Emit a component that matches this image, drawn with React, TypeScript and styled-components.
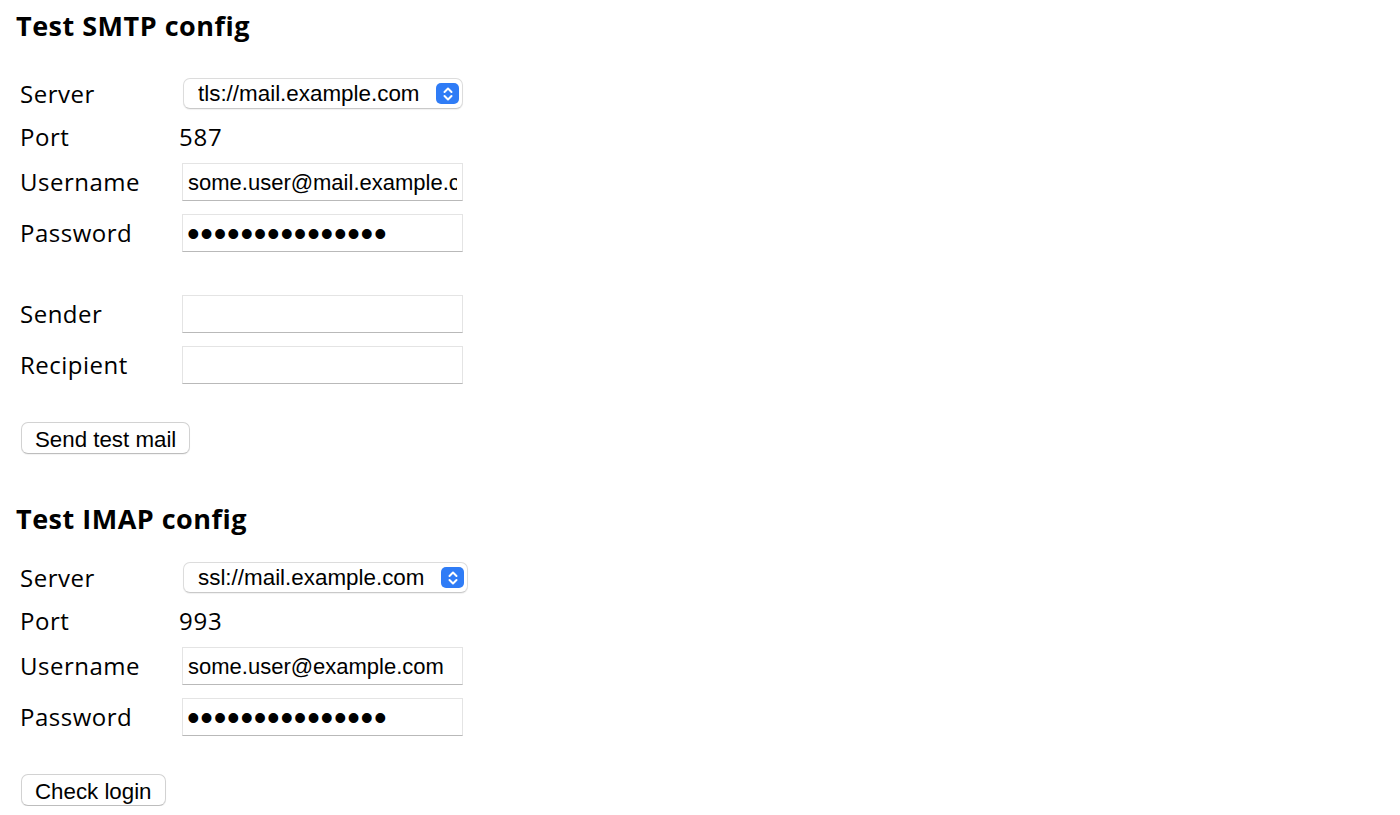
import React from "react";
import styled, { createGlobalStyle } from "styled-components";

const GlobalStyle = createGlobalStyle`
  html, body {
    margin: 0;
    padding: 0;
    background: #ffffff;
    color: #000000;
    font-family: "Open Sans", "Noto Sans", sans-serif;
  }
`;

const Page = styled.div`
  display: flex;
  flex-direction: column;
  padding: 10px 0 0 16px;
`;

const Section = styled.section<{ $after?: number }>`
  display: flex;
  flex-direction: column;
  align-items: flex-start;
  margin-bottom: ${(p) => p.$after ?? 0}px;
`;

const Title = styled.h2`
  margin: 0;
  font-family: "Open Sans", "Noto Sans", sans-serif;
  font-weight: 700;
  font-size: 27px;
  line-height: 32px;
  letter-spacing: 0.5px;
  color: #000;
`;

const Fields = styled.div<{ $top: number }>`
  display: flex;
  flex-direction: column;
  gap: 13px;
  margin-top: ${(p) => p.$top}px;
`;

const Row = styled.div<{ $h: number; $pt?: number }>`
  display: grid;
  grid-template-columns: 166px auto;
  align-items: center;
  height: ${(p) => p.$h}px;
  padding-top: ${(p) => p.$pt ?? 0}px;
  box-sizing: border-box;
`;

const Spacer = styled.div`
  height: 17px;
`;

const Label = styled.span`
  padding-left: 4px;
  font-size: 24px;
  line-height: 28px;
  letter-spacing: 0.5px;
`;

const Value = styled.span`
  font-size: 24px;
  line-height: 28px;
  letter-spacing: 0.8px;
  margin-left: -3px;
`;

const TextInput = styled.input`
  box-sizing: border-box;
  width: 281px;
  height: 38px;
  margin: 0;
  padding: 1px 5px 0;
  border: 1px solid #e4e4e4;
  border-bottom-color: #b9b9b9;
  border-radius: 0;
  background: #fff;
  font-family: "Liberation Sans", Arial, sans-serif;
  font-size: 22px;
  color: #000;
  outline: none;
`;

const PasswordInput = styled(TextInput)`
  font-size: 36px;
  letter-spacing: 0.75px;
  padding-left: 4px;
`;

const SelectWrap = styled.div`
  position: relative;
  display: inline-flex;
  justify-self: start;
  margin-left: 1px;
`;

const Select = styled.select`
  appearance: none;
  -webkit-appearance: none;
  box-sizing: border-box;
  height: 31px;
  margin: 0;
  padding: 0 42px 0 14px;
  border: 1px solid #dcdcdc;
  border-bottom-color: #c9c9c9;
  border-radius: 7px;
  background: #fff;
  box-shadow: 0 1px 1px rgba(0, 0, 0, 0.06);
  font-family: "Liberation Sans", Arial, sans-serif;
  font-size: 22.4px;
  color: #000;
  outline: none;
`;

const Stepper = styled.span`
  position: absolute;
  right: 4px;
  top: 5px;
  width: 23px;
  height: 21px;
  border-radius: 5px;
  background: #2f7cf6;
  display: flex;
  align-items: center;
  justify-content: center;
  pointer-events: none;
`;

const Button = styled.button<{ $top: number }>`
  box-sizing: border-box;
  height: 32px;
  margin: ${(p) => p.$top}px 0 0 5px;
  padding: 3px 13px 0;
  border: 1px solid #d2d2d2;
  border-bottom-color: #bdbdbd;
  border-radius: 7px;
  background: #fff;
  box-shadow: 0 1px 1px rgba(0, 0, 0, 0.05);
  font-family: "Liberation Sans", Arial, sans-serif;
  font-size: 22.3px;
  line-height: 26px;
  color: #000;
  cursor: pointer;
`;

const StepperIcon = () => (
  <svg width="12" height="16" viewBox="0 0 12 16" fill="none">
    <path d="M2.5 6 L6 2.5 L9.5 6" stroke="#fff" strokeWidth="2" strokeLinecap="round" strokeLinejoin="round" />
    <path d="M2.5 10 L6 13.5 L9.5 10" stroke="#fff" strokeWidth="2" strokeLinecap="round" strokeLinejoin="round" />
  </svg>
);

const ServerSelect = ({ value }: { value: string }) => (
  <SelectWrap>
    <Select defaultValue={value}>
      <option value={value}>{value}</option>
    </Select>
    <Stepper>
      <StepperIcon />
    </Stepper>
  </SelectWrap>
);

export default function App() {
  return (
    <>
      <GlobalStyle />
      <Page>
        <Section $after={49}>
          <Title>Test SMTP config</Title>
          <Fields $top={36}>
            <Row $h={31}>
              <Label>Server</Label>
              <ServerSelect value="tls://mail.example.com" />
            </Row>
            <Row $h={28} $pt={1}>
              <Label>Port</Label>
              <Value>587</Value>
            </Row>
            <Row $h={38}>
              <Label>Username</Label>
              <TextInput type="text" defaultValue="some.user@mail.example.com" />
            </Row>
            <Row $h={38}>
              <Label>Password</Label>
              <PasswordInput type="password" defaultValue="secretpassword1" />
            </Row>
            <Spacer />
            <Row $h={38}>
              <Label>Sender</Label>
              <TextInput type="text" defaultValue="" />
            </Row>
            <Row $h={38}>
              <Label>Recipient</Label>
              <TextInput type="text" defaultValue="" />
            </Row>
          </Fields>
          <Button $top={38}>Send test mail</Button>
        </Section>
        <Section>
          <Title>Test IMAP config</Title>
          <Fields $top={27}>
            <Row $h={31}>
              <Label>Server</Label>
              <ServerSelect value="ssl://mail.example.com" />
            </Row>
            <Row $h={28} $pt={1}>
              <Label>Port</Label>
              <Value>993</Value>
            </Row>
            <Row $h={38}>
              <Label>Username</Label>
              <TextInput type="text" defaultValue="some.user@example.com" />
            </Row>
            <Row $h={38}>
              <Label>Password</Label>
              <PasswordInput type="password" defaultValue="secretpassword1" />
            </Row>
          </Fields>
          <Button $top={38}>Check login</Button>
        </Section>
      </Page>
    </>
  );
}
